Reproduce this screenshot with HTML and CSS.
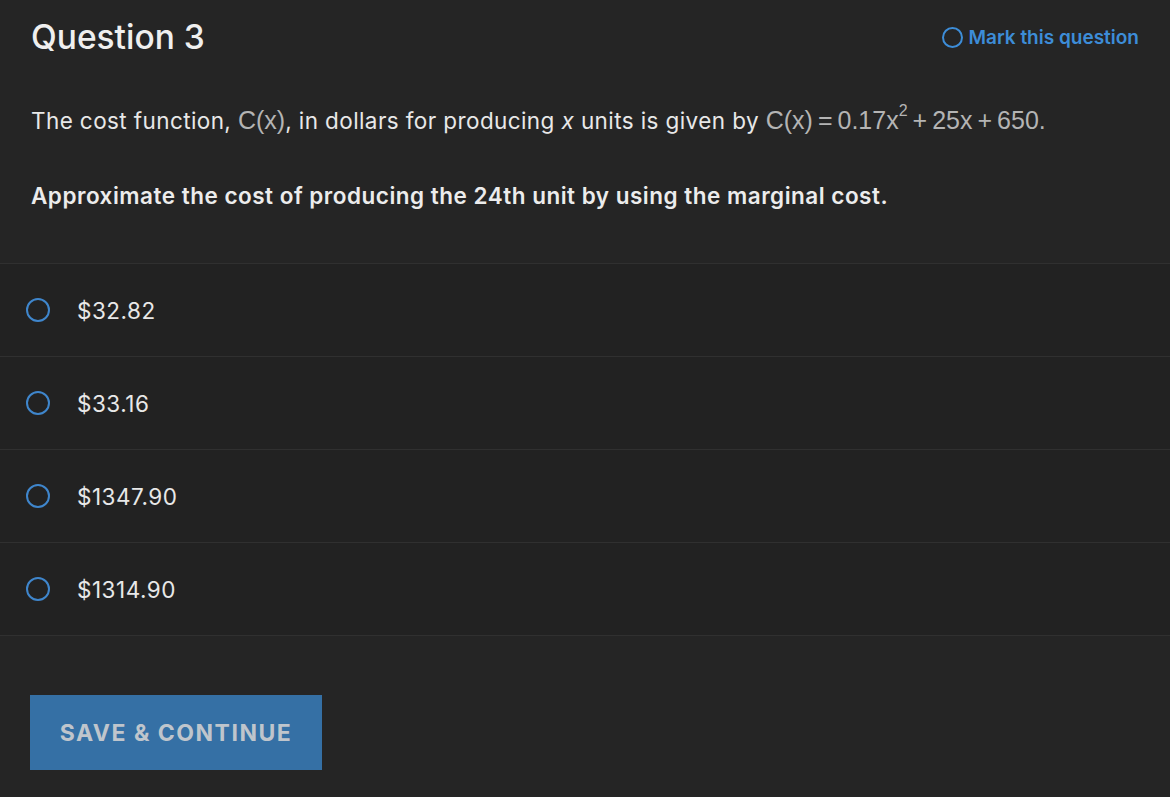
FILE: index.html
```html
<!DOCTYPE html>
<html>
<head>
<meta charset="utf-8">
<link rel="stylesheet" href="styles.css">
</head>
<body>
<div class="page">
  <div class="top">
    <div class="head">
      <h1 class="title">Question 3</h1>
      <a class="mark"><span class="ring small"></span>Mark this question</a>
    </div>
    <p class="stem">The cost function, <span class="math">C(x)</span>, in dollars for producing <i>x</i> units is given by <span class="math">C(x)<span class="op">=</span>0.17x<sup>2</sup><span class="op">+</span>25x<span class="op">+</span>650.</span></p>
    <p class="ask">Approximate the cost of producing the 24th unit by using the marginal cost.</p>
  </div>
  <div class="options">
    <div class="opt"><span class="ring"></span><span class="val">$32.82</span></div>
    <div class="opt"><span class="ring"></span><span class="val">$33.16</span></div>
    <div class="opt"><span class="ring"></span><span class="val">$1347.90</span></div>
    <div class="opt"><span class="ring"></span><span class="val">$1314.90</span></div>
  </div>
  <div class="actions">
    <button class="save">SAVE &amp; CONTINUE</button>
  </div>
</div>
</body>
</html>
```
FILE: styles.css
```css
html, body {
  margin: 0;
  padding: 0;
  background: #252525;
}
body {
  font-family: Inter, "Open Sans", sans-serif;
  color: #e6e6e6;
}
.page {
  width: 1170px;
  height: 797px;
  background: #252525;
}
.top {
  padding: 18px 31px 0 31px;
}
.head {
  display: flex;
  justify-content: space-between;
  align-items: center;
  height: 38px;
}
.title {
  margin: 0;
  font-size: 33.5px;
  line-height: 38px;
  font-weight: 500;
  color: #efefef;
}
.mark {
  display: flex;
  align-items: center;
  gap: 6px;
  color: #3d8dd8;
  font-size: 19px;
  font-weight: 600;
  letter-spacing: 0;
  margin-top: 1px;
}
.ring {
  display: inline-block;
  box-sizing: border-box;
  width: 24px;
  height: 24px;
  border: 2.5px solid #3f86cc;
  border-radius: 50%;
  flex: none;
}
.ring.small {
  width: 21px;
  height: 21px;
  border: 2px solid #3d8dd8;
}
.stem {
  margin: 49px 0 0 0;
  font-size: 22.5px;
  line-height: 30px;
  letter-spacing: 0.4px;
  color: #e8e8e8;
}
.stem i {
  font-style: italic;
}
.math {
  font-family: "Liberation Sans", Arial, sans-serif;
  color: #b4b4b4;
  font-size: 25px;
  letter-spacing: 0;
}
.math .op {
  margin: 0 5px;
}
.math sup {
  font-size: 16px;
  line-height: 0;
  vertical-align: 13px;
}
.ask {
  margin: 45px 0 0 0;
  font-size: 22.5px;
  line-height: 30px;
  font-weight: 600;
  letter-spacing: 0.5px;
  color: #ececec;
  padding-bottom: 52px;
}
.options {
  border-top: 1px solid #303030;
}
.opt {
  display: flex;
  align-items: center;
  gap: 27px;
  height: 92px;
  padding-left: 26px;
  background: #222222;
  border-bottom: 1px solid #303030;
}
.val {
  font-size: 22.5px;
  letter-spacing: 0.5px;
  color: #e8e8e8;
}
.actions {
  padding: 59px 30px 0 30px;
}
.save {
  width: 292px;
  height: 75px;
  border: none;
  background: #3570a5;
  color: #bfc5cc;
  font-family: Inter, sans-serif;
  font-size: 23px;
  font-weight: 700;
  letter-spacing: 1.5px;
  padding: 0;
}
```
